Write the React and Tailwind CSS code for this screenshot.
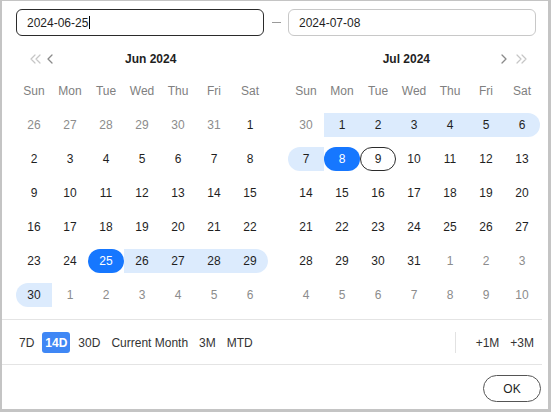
import React from "react";

const WEEK = ["Sun", "Mon", "Tue", "Wed", "Thu", "Fri", "Sat"];

const JUN = [
  [[26, "o"], [27, "o"], [28, "o"], [29, "o"], [30, "o"], [31, "o"], [1, "n"]],
  [[2, "n"], [3, "n"], [4, "n"], [5, "n"], [6, "n"], [7, "n"], [8, "n"]],
  [[9, "n"], [10, "n"], [11, "n"], [12, "n"], [13, "n"], [14, "n"], [15, "n"]],
  [[16, "n"], [17, "n"], [18, "n"], [19, "n"], [20, "n"], [21, "n"], [22, "n"]],
  [[23, "n"], [24, "n"], [25, "sel"], [26, "r"], [27, "r"], [28, "r"], [29, "rR"]],
  [[30, "rL"], [1, "o"], [2, "o"], [3, "o"], [4, "o"], [5, "o"], [6, "o"]],
];

const JUL = [
  [[30, "o"], [1, "r"], [2, "r"], [3, "r"], [4, "r"], [5, "r"], [6, "rR"]],
  [[7, "rL"], [8, "sel"], [9, "hov"], [10, "n"], [11, "n"], [12, "n"], [13, "n"]],
  [[14, "n"], [15, "n"], [16, "n"], [17, "n"], [18, "n"], [19, "n"], [20, "n"]],
  [[21, "n"], [22, "n"], [23, "n"], [24, "n"], [25, "n"], [26, "n"], [27, "n"]],
  [[28, "n"], [29, "n"], [30, "n"], [31, "n"], [1, "o"], [2, "o"], [3, "o"]],
  [[4, "o"], [5, "o"], [6, "o"], [7, "o"], [8, "o"], [9, "o"], [10, "o"]],
];

function Chevron({ dir = "left", color }) {
  const d = dir === "left" ? "M6 1 L2 5 L6 9" : "M1 1 L5 5 L1 9";
  return (
    <svg width="7" height="10" viewBox="0 0 7 10" fill="none">
      <path d={d} stroke={color} strokeWidth="1.3" strokeLinecap="round" strokeLinejoin="round" />
    </svg>
  );
}

function DoubleChevron({ dir = "left", color }) {
  const d =
    dir === "left"
      ? "M5 1 L1 5 L5 9 M10 1 L6 5 L10 9"
      : "M1 1 L5 5 L1 9 M6 1 L10 5 L6 9";
  return (
    <svg width="11" height="10" viewBox="0 0 11 10" fill="none">
      <path d={d} stroke={color} strokeWidth="1.2" strokeLinecap="round" strokeLinejoin="round" />
    </svg>
  );
}

function DayCell({ label, type }) {
  let band = "";
  let text = "text-[#1f1f1f]";
  if (type === "o") text = "text-[#8c8c8c]";
  if (type === "r") band = "bg-[#dcebfd]";
  if (type === "rR") band = "bg-[#dcebfd] rounded-r-full";
  if (type === "rL") band = "bg-[#dcebfd] rounded-l-full";
  if (type === "sel") {
    band = "bg-[#1677ff] rounded-full";
    text = "text-white";
  }
  if (type === "hov") band = "border border-[#2b2b2b] rounded-full";
  return (
    <div className="h-[34px] pt-[5px]">
      <div className={`h-[24px] flex items-center justify-center ${band} ${text}`}>
        {label}
      </div>
    </div>
  );
}

function Calendar({ title, weeks, side }) {
  return (
    <div className="w-[252px]">
      {side === "left" ? (
        <div className="h-[20px] flex items-center pl-[14px] pt-px">
          <DoubleChevron dir="left" color="#c6c6c6" />
          <span className="ml-[5px]">
            <Chevron dir="left" color="#8a8a8a" />
          </span>
          <span className="ml-[72px] font-bold text-[#1f1f1f]">{title}</span>
        </div>
      ) : (
        <div className="h-[20px] flex items-center justify-end pr-[13px] pt-px">
          <span className="mr-[71px] font-bold text-[#1f1f1f]">{title}</span>
          <Chevron dir="right" color="#8a8a8a" />
          <span className="ml-[8px]">
            <DoubleChevron dir="right" color="#c6c6c6" />
          </span>
        </div>
      )}
      <div className="grid grid-cols-7 mt-[4px] h-[36px] items-center pt-px">
        {WEEK.map((w) => (
          <div key={w} className="text-center text-[#808080]">
            {w}
          </div>
        ))}
      </div>
      <div className="grid grid-cols-7">
        {weeks.flat().map(([l, t], i) => (
          <DayCell key={i} label={l} type={t} />
        ))}
      </div>
    </div>
  );
}

export default function App() {
  const left = ["7D", "14D", "30D", "Current Month", "3M", "MTD"];
  return (
    <div className="w-[551px] h-[412px] bg-[#c4c4c4] pt-px pl-[2px] pr-[3px] pb-[3px] font-['Liberation_Sans',Arial,sans-serif] text-[12px] leading-none">
      <div className="bg-white h-full flex flex-col">
        <div className="flex items-center pt-[8px] pl-[14px]">
          <div className="w-[248px] h-[27px] border border-[#2b2b2b] rounded-[6px] pl-[10px] flex items-center text-[#1f1f1f]">
            <span>2024-06-25</span>
            <span className="w-px h-[13px] bg-black ml-px" />
          </div>
          <div className="w-[24px] flex justify-center">
            <span className="w-[9px] h-px bg-[#9a9a9a]" />
          </div>
          <div className="w-[248px] h-[27px] border border-[#c8c8c8] rounded-[6px] pl-[10px] flex items-center text-[#1f1f1f]">
            2024-07-08
          </div>
        </div>

        <div className="flex gap-[20px] pl-[14px] mt-[12px]">
          <Calendar title="Jun 2024" weeks={JUN} side="left" />
          <Calendar title="Jul 2024" weeks={JUL} side="right" />
        </div>

        <div className="mt-[7px] h-px bg-[#e4e4e4] mr-[6px]" />

        <div className="h-[44px] flex items-center pl-[14px] pr-[5px] mr-[6px] pt-px">
          <div className="flex items-center gap-[5px]">
            {left.map((s) => (
              <div
                key={s}
                className={
                  s === "14D"
                    ? "h-[21px] px-[3px] flex items-center rounded-[3px] bg-[#3f87f5] text-white font-bold"
                    : "h-[21px] px-[3px] flex items-center text-[#333333]"
                }
              >
                {s}
              </div>
            ))}
          </div>
          <div className="flex-1" />
          <div className="w-px h-[21px] bg-[#e2e2e2] mr-[17px]" />
          <div className="flex items-center gap-[5px]">
            {["+1M", "+3M"].map((s) => (
              <div key={s} className="h-[21px] px-[3px] flex items-center text-[#333333]">
                {s}
              </div>
            ))}
          </div>
        </div>

        <div className="h-px bg-[#e4e4e4] mr-[6px]" />

        <div className="flex justify-end pt-[10px] pr-[7px]">
          <div className="w-[58px] h-[27px] border border-[#555555] rounded-full flex items-center justify-center text-[#1f1f1f]">
            OK
          </div>
        </div>
      </div>
    </div>
  );
}
